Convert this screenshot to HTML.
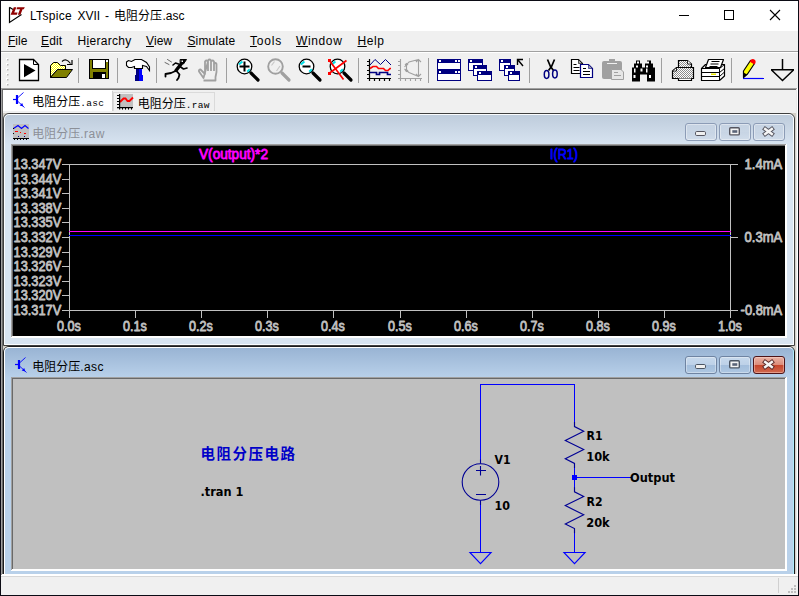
<!DOCTYPE html>
<html lang="zh">
<head>
<meta charset="utf-8">
<title>LTspice XVII - 电阻分压.asc</title>
<style>
html,body{margin:0;padding:0;}
body{width:799px;height:596px;overflow:hidden;background:#f0f0f0;position:relative;
  font-family:"Liberation Sans","Noto Sans CJK SC",sans-serif;font-size:12px;color:#000;}
.a{position:absolute;}
.t{position:absolute;white-space:nowrap;line-height:16px;font-size:12px;}
.cj{font-family:"Liberation Sans","Noto Sans CJK SC","WenQuanYi Zen Hei",sans-serif;}
.mi{position:absolute;top:33px;font-size:12px;line-height:16px;white-space:nowrap;}
.mi u{text-decoration:underline;text-decoration-thickness:1px;text-underline-offset:1px;}
svg{position:absolute;left:0;top:0;}
svg text{white-space:pre;}
</style>
</head>
<body>
<div class="a" style="left:1px;top:1px;width:797px;height:30px;background:#fff;"></div>
<div class="a" style="left:1px;top:31px;width:797px;height:20px;background:#f0f0f0;"></div>
<div class="a" style="left:1px;top:51px;width:797px;height:1px;background:#a0a0a0;"></div>
<div class="a" style="left:1px;top:52px;width:797px;height:1px;background:#fff;"></div>
<div class="a" style="left:1px;top:53px;width:797px;height:35px;background:#f0f0f0;"></div>
<div class="a" style="left:1px;top:88px;width:797px;height:488px;background:#d4d0c8;"></div>
<div class="a" style="left:1px;top:88px;width:797px;height:1px;background:#a0a0a0;"></div>
<div class="a" style="left:1px;top:88px;width:1px;height:488px;background:#a0a0a0;"></div>
<div class="a" style="left:2px;top:89px;width:795px;height:1px;background:#696969;"></div>
<div class="a" style="left:2px;top:89px;width:1px;height:486px;background:#696969;"></div>
<div class="a" style="left:797px;top:88px;width:1px;height:488px;background:#fff;"></div>
<div class="a" style="left:796px;top:89px;width:1px;height:486px;background:#e8e8e8;"></div>
<div class="a" style="left:1px;top:575px;width:797px;height:1px;background:#fff;"></div>
<div class="a" style="left:2px;top:574px;width:795px;height:1px;background:#fff;"></div>
<div class="a" style="left:3px;top:90px;width:793px;height:23px;background:#f0f0f0;"></div>
<div class="a" style="left:3px;top:90px;width:109px;height:21px;background:#fff;"></div>
<div class="a" style="left:112px;top:91px;width:1px;height:20px;background:#d0d0d0;"></div>
<div class="a" style="left:113px;top:92px;width:102px;height:19px;background:#f0f0f0;box-sizing:border-box;border:1px solid #dadada;border-bottom:none;"></div>
<div class="a" style="left:1px;top:576px;width:797px;height:1px;background:#d7d7d7;"></div>
<div class="a" style="left:1px;top:577px;width:797px;height:18px;background:#f0f0f0;"></div>
<div class="a" style="left:778px;top:578px;width:1px;height:15px;background:#d0d0d0;"></div>
<div class="t" id="tt0" style="left:30px;top:8px;letter-spacing:.33px;">LTspice</div>
<div class="t" id="tt1" style="left:77.5px;top:8px;">XVII</div>
<div class="t" id="tt2" style="left:105px;top:8px;">-</div>
<div class="t" id="tt3" style="left:114px;top:8px;font-family:"Liberation Sans","Noto Sans CJK SC","WenQuanYi Zen Hei",sans-serif;">电阻分压</div>
<div class="t" id="tt4" style="left:162.5px;top:8px;">.asc</div>
<div class="mi" id="m0" style="left:8px;letter-spacing:0px"><u>F</u>ile</div>
<div class="mi" id="m1" style="left:41px;letter-spacing:0.15px"><u>E</u>dit</div>
<div class="mi" id="m2" style="left:77.5px;letter-spacing:0.3px">H<u>i</u>erarchy</div>
<div class="mi" id="m3" style="left:146px;letter-spacing:0.15px"><u>V</u>iew</div>
<div class="mi" id="m4" style="left:187.4px;letter-spacing:0.16px"><u>S</u>imulate</div>
<div class="mi" id="m5" style="left:250px;letter-spacing:0.8px"><u>T</u>ools</div>
<div class="mi" id="m6" style="left:296px;letter-spacing:0.63px"><u>W</u>indow</div>
<div class="mi" id="m7" style="left:357.5px;letter-spacing:0.57px"><u>H</u>elp</div>
<div class="a" style="left:3px;top:113px;width:792px;height:233px;box-sizing:border-box;border:1px solid #3f3f3f;border-radius:6px 6px 0 0;background:linear-gradient(#bdcbdb 0px,#d8e4f1 31px,#d8e4f1);"><div class="a" style="left:0;top:0;right:0;bottom:0;box-sizing:border-box;border:1px solid #fafcfe;border-radius:5px 5px 0 0;"></div></div>
<div class="a" style="left:11px;top:144px;width:776px;height:194px;background:#fff;"></div>
<div class="a" style="left:11px;top:144px;width:775px;height:193px;background:#a0a0a0;"></div>
<div class="a" style="left:12px;top:145px;width:774px;height:192px;background:#fff;"></div>
<div class="a" style="left:12px;top:145px;width:773px;height:191px;background:#696969;"></div>
<div class="a" style="left:13px;top:146px;width:772px;height:190px;background:#000;"></div>
<div class="a" style="left:3px;top:346px;width:792px;height:228px;overflow:hidden;"><div class="a" style="left:0;top:0;width:792px;height:240px;box-sizing:border-box;border:1px solid #1c1c1c;border-radius:6px 6px 0 0;background:linear-gradient(#98b3d3 0px,#b9d1ea 31px,#b9d1ea);"><div class="a" style="left:0;top:0;right:0;bottom:0;box-sizing:border-box;border:1px solid #fff;border-right-color:#b0ecfb;border-radius:5px 5px 0 0;"></div></div></div>
<div class="a" style="left:11px;top:377px;width:776px;height:194px;background:#fff;"></div>
<div class="a" style="left:11px;top:377px;width:775px;height:193px;background:#a0a0a0;"></div>
<div class="a" style="left:12px;top:378px;width:774px;height:192px;background:#fff;"></div>
<div class="a" style="left:12px;top:378px;width:773px;height:191px;background:#696969;"></div>
<div class="a" style="left:13px;top:379px;width:772px;height:190px;background:#c0c0c0;"></div>
<div class="a" style="left:685px;top:123px;width:32px;height:18px;box-sizing:border-box;border-radius:3px;border:1px solid #8c9cb6;background:linear-gradient(#c6d3e3 0,#c9d6e5 49%,#c7d4e4 50%,#d0dcea 100%);box-shadow:inset 0 0 0 1px rgba(255,255,255,.4);"></div>
<div class="a" style="left:719px;top:123px;width:32px;height:18px;box-sizing:border-box;border-radius:3px;border:1px solid #8c9cb6;background:linear-gradient(#c6d3e3 0,#c9d6e5 49%,#c7d4e4 50%,#d0dcea 100%);box-shadow:inset 0 0 0 1px rgba(255,255,255,.4);"></div>
<div class="a" style="left:753px;top:123px;width:32px;height:18px;box-sizing:border-box;border-radius:3px;border:1px solid #8c9cb6;background:linear-gradient(#c6d3e3 0,#c9d6e5 49%,#c7d4e4 50%,#d0dcea 100%);box-shadow:inset 0 0 0 1px rgba(255,255,255,.4);"></div>
<div class="a" style="left:685px;top:356px;width:32px;height:18px;box-sizing:border-box;border-radius:3px;border:1px solid #6f84a2;background:linear-gradient(#c7d9ec 0,#bdd1e8 49%,#a3bedc 50%,#aec7e2 100%);box-shadow:inset 0 0 0 1px rgba(255,255,255,.35);"></div>
<div class="a" style="left:719px;top:356px;width:32px;height:18px;box-sizing:border-box;border-radius:3px;border:1px solid #6f84a2;background:linear-gradient(#c7d9ec 0,#bdd1e8 49%,#a3bedc 50%,#aec7e2 100%);box-shadow:inset 0 0 0 1px rgba(255,255,255,.35);"></div>
<div class="a" style="left:753px;top:356px;width:32px;height:18px;box-sizing:border-box;border-radius:3px;border:1px solid #4d1418;background:linear-gradient(#e9b3a6 0,#dc8b79 49%,#c6432a 50%,#cf6a50 100%);box-shadow:inset 0 0 0 1px rgba(255,220,210,.45);"></div>
<div class="t" style="left:32.200px;top:126px;color:#8c9098;"><span class="cj">电阻分压</span><span style="letter-spacing:.5px">.raw</span></div>
<div class="t" style="left:32.200px;top:359px;color:#000;"><span class="cj">电阻分压</span><span style="letter-spacing:.4px">.asc</span></div>
<div class="t" style="left:32.200px;top:94px;"><span class="cj">电阻分压</span><span style="font-family:'Liberation Mono',monospace;font-size:9.5px;letter-spacing:.3px;">.asc</span></div>
<div class="t" style="left:137.800px;top:96px;"><span class="cj">电阻分压</span><span style="font-family:'Liberation Mono',monospace;font-size:9.5px;letter-spacing:.3px;">.raw</span></div>
<svg width="799" height="596" viewBox="0 0 799 596">
<g><path d="M9.500,7.300 V22.500 L21.500,14.600 M9.500,7.300 L13,9.600" fill="none" stroke="#000" stroke-width="1.200"/><polygon points="13.800,7.200 16.400,7.200 14.200,12.600 17.600,12.600 16.800,14.800 10.600,14.800" fill="#900000"/><polygon points="17.200,7.200 24.800,7.200 23.800,9.200 22.600,9.200 20.400,14.800 17.800,14.800 20,9.200 16.400,9.200" fill="#900000"/></g><g shape-rendering="crispEdges"><rect x="679" y="15" width="10" height="1" fill="#000"/><rect x="724.500" y="10.500" width="9" height="9" fill="none" stroke="#000" stroke-width="1"/></g><path d="M770,10 L780,20 M780,10 L770,20" stroke="#000" stroke-width="1.100" fill="none"/><rect x="794" y="588" width="2" height="2" fill="#bfbfbf"/><rect x="794" y="591" width="2" height="2" fill="#bfbfbf"/><rect x="791" y="591" width="2" height="2" fill="#bfbfbf"/><rect x="794" y="585" width="2" height="2" fill="#bfbfbf"/><rect x="791" y="588" width="2" height="2" fill="#bfbfbf"/><rect x="788" y="591" width="2" height="2" fill="#bfbfbf"/>
<defs><pattern id="dz" width="2" height="2" patternUnits="userSpaceOnUse"><rect width="2" height="2" fill="#fff"/><rect width="1" height="1" fill="#8c8c8c"/><rect x="1" y="1" width="1" height="1" fill="#8c8c8c"/></pattern><pattern id="dy" width="2" height="2" patternUnits="userSpaceOnUse"><rect width="2" height="2" fill="#fff"/><rect width="1" height="1" fill="#ffff00"/><rect x="1" y="1" width="1" height="1" fill="#ffff00"/></pattern></defs>
<rect x="78" y="58" width="1" height="25" fill="#a0a0a0"/><rect x="117" y="58" width="1" height="25" fill="#a0a0a0"/><rect x="156" y="58" width="1" height="25" fill="#a0a0a0"/><rect x="226" y="58" width="1" height="25" fill="#a0a0a0"/><rect x="358" y="58" width="1" height="25" fill="#a0a0a0"/><rect x="428" y="58" width="1" height="25" fill="#a0a0a0"/><rect x="529" y="58" width="1" height="25" fill="#a0a0a0"/><rect x="661" y="58" width="1" height="25" fill="#a0a0a0"/><rect x="731" y="58" width="1" height="25" fill="#a0a0a0"/><rect x="6" y="58" width="2" height="2" fill="#fff"/><rect x="7" y="59" width="1.500" height="1.500" fill="#b4b4b4"/><rect x="6" y="63" width="2" height="2" fill="#fff"/><rect x="7" y="64" width="1.500" height="1.500" fill="#b4b4b4"/><rect x="6" y="68" width="2" height="2" fill="#fff"/><rect x="7" y="69" width="1.500" height="1.500" fill="#b4b4b4"/><rect x="6" y="73" width="2" height="2" fill="#fff"/><rect x="7" y="74" width="1.500" height="1.500" fill="#b4b4b4"/><rect x="6" y="78" width="2" height="2" fill="#fff"/><rect x="7" y="79" width="1.500" height="1.500" fill="#b4b4b4"/><rect x="6" y="83" width="2" height="2" fill="#fff"/><rect x="7" y="84" width="1.500" height="1.500" fill="#b4b4b4"/>
<g><path d="M19.5,59.5 H33.5 L38.5,64.5 V80.5 H19.5 Z" fill="#fff" stroke="#000" stroke-width="1.3"/><path d="M33.5,59.5 V64.5 H38.5" fill="none" stroke="#000" stroke-width="1"/><polygon points="24,64 24,77.2 35.5,70.5" fill="#000"/></g>
<g><path d="M50.5,77.5 V65.5 L53.5,62.5 H57.5 L60.5,65.5 H65.5 V69.5 H57.5 Z" fill="url(#dy)" stroke="#000" stroke-width="1"/><path d="M50.5,77.5 L57.5,69.5 H72.5 L66.5,77.5 Z" fill="#808000" stroke="#000" stroke-width="1"/><path d="M62,61.5 Q66,57.5 70.5,63.5" fill="none" stroke="#000" stroke-width="1.2"/><path d="M67,64.5 H72 V60" fill="none" stroke="#000" stroke-width="1.2"/></g>
<g shape-rendering="crispEdges"><rect x="89" y="59" width="20" height="20" fill="#000"/><rect x="90" y="60" width="18" height="18" fill="#808000"/><rect x="92" y="60" width="14" height="9" fill="#000"/><rect x="93" y="60" width="12" height="8" fill="#fff"/><rect x="93" y="72" width="13" height="6" fill="#000"/><rect x="102" y="74" width="3" height="4" fill="#fff"/><rect x="106" y="60" width="2" height="2" fill="#fff"/></g>
<g><path d="M126.5,62 L128.5,60.5 L131.5,61.5 L135,59.5 H141.5 L146.5,62.5 L149.5,67 V70.5 L146.5,66.5 L142.5,65.5 V68.5 H134.5 V66.5 L131.5,67.5 H128.5 L126.5,65.5 Z" fill="#fff" stroke="#000" stroke-width="1.1"/><rect x="136" y="69" width="3" height="12" fill="#000080"/><rect x="139" y="69" width="3" height="12" fill="#0000ff"/><rect x="135" y="75" width="2" height="6" fill="#000080"/><rect x="141" y="75" width="2" height="6" fill="#0000ff"/></g>
<g fill="none" stroke="#000" stroke-linecap="round" stroke-linejoin="round"><polygon points="180.5,59.5 186.5,59.5 183.5,64 180.5,63" fill="#000" stroke-width="1"/><rect x="181.5" y="60.5" width="1.5" height="1.5" fill="#fff" stroke="none"/><path d="M181.5,63.5 L176,70.5" stroke-width="3.4"/><path d="M178.5,64 L175.5,63 L173,65" stroke-width="1.6"/><path d="M180,66.5 L183.5,69 L187,68" stroke-width="1.6"/><path d="M175.500,71 L171,73 L165.5,74 V76.5" stroke-width="1.8"/><path d="M177,71.5 L179.5,74.500 L178.5,78 L177,80" stroke-width="1.8"/><path d="M165,62.5 l4,2 M167.5,59.5 l4,2.5" stroke-width="0.8" stroke="#444"/></g>
<g fill="none" stroke="#a0a0a0" stroke-width="1.8" stroke-linejoin="round"><path d="M203.5,80.500 H215.500 V77 L216.5,72 V64 Q215.5,62 214,64 V71 M214,64 V61.5 Q212.5,59.5 211,61.500 V71 M211,61.5 V60.5 Q209.500,58.5 208,60.5 V71 M208,61.500 Q206.5,59.5 205,61.5 V74 L200.500,69.5 Q198.5,69.5 199,71.500 L203.5,78 Z"/></g>
<g><line x1="251" y1="73" x2="258" y2="80" stroke="#000" stroke-width="3.2" stroke-linecap="round"/><circle cx="244.5" cy="66.5" r="7.300" fill="#fff" stroke="#000" stroke-width="1.3"/><path d="M238.9,64.5 l3.500,-3 M247.3,71.8 l2.500,-2.500" stroke="#00e0e8" stroke-width="2" fill="none"/></g><path d="M239.5,66.500 h10 M244.500,61.5 v10" stroke="#000" stroke-width="2" fill="none"/>
<g><line x1="282" y1="73" x2="289" y2="80" stroke="#a0a0a0" stroke-width="3.2" stroke-linecap="round"/><circle cx="275.5" cy="66.5" r="7.300" fill="#f0f0f0" stroke="#a0a0a0" stroke-width="1.9"/><path d="M271.5,65.5 l3,-4 M276.5,71 l3.5,-5" stroke="#c8c8c8" stroke-width="1.2" fill="none"/></g>
<g><line x1="313" y1="73" x2="320" y2="80" stroke="#000" stroke-width="3.2" stroke-linecap="round"/><circle cx="306.5" cy="66.5" r="7.300" fill="#fff" stroke="#000" stroke-width="1.3"/><path d="M300.9,64.5 l3.500,-3 M309.3,71.8 l2.500,-2.500" stroke="#00e0e8" stroke-width="2" fill="none"/></g><path d="M302.500,66.500 h8" stroke="#000" stroke-width="2" fill="none"/>
<g><line x1="344" y1="73" x2="351" y2="80" stroke="#000" stroke-width="3.2" stroke-linecap="round"/><circle cx="337.5" cy="66.5" r="7.300" fill="#fff" stroke="#000" stroke-width="1.3"/><path d="M331.9,64.5 l3.500,-3 M340.3,71.8 l2.500,-2.500" stroke="#00e0e8" stroke-width="2" fill="none"/></g><path d="M329,60 L343.5,79.500 M346.5,60.500 L329,73.500" stroke="#ff0000" stroke-width="1.7" fill="none"/><rect x="328" y="59" width="3" height="3" fill="#f00"/><rect x="328" y="72" width="3" height="3" fill="#f00"/>
<g fill="none"><path d="M369.500,59 V81 M367,78.500 H391 M367,61.500 h2 M367,65.500 h2 M367,70.500 h2 M367,74.500 h2 M374.500,79 v2 M379.500,79 v2 M384.500,79 v2 M389.500,79 v2" stroke="#000" stroke-width="1.2"/><path d="M370,65 L375,59.5 L380.500,64.5 L385.500,59.5 L391,65" stroke="#000080" stroke-width="1"/><path d="M370,68.500 L373,66.500 H376.500 L378.500,68.500 H383.500 L385.500,70.500 H388 L390,68.500 H391" stroke="#ff0000" stroke-width="1.7"/><path d="M370,72.500 H376.500 V74.500 H379.500 V72.500 H387.500 V74.500 H391" stroke="#000080" stroke-width="1.7"/></g>
<g fill="none" stroke="#a0a0a0" stroke-width="1.100"><path d="M400.500,59 V81 M398,78.500 H422 M398,61.500 h2 M398,65.500 h2 M398,70.500 h2 M398,74.500 h2 M405.500,79 v2 M410.500,79 v2 M415.500,79 v2 M420.500,79 v2"/><path d="M404.500,67 L409,62 L418.500,59.500 M404.500,69 L409,72.500 L418.500,76.500 M406.500,63.500 V71.500 M405,65 l1.500,-1.500 l1.500,1.500 M405,70 l1.500,1.500 l1.500,-1.500 M418.500,59.500 V76.500 M416,62 l2.500,-2.500 l2.500,2.500 M416,74 l2.500,2.500 l2.500,-2.500"/></g>
<g shape-rendering="crispEdges"><rect x="437.5" y="59.5" width="23" height="10" fill="#fff" stroke="#000080" stroke-width="1"/><rect x="437" y="59" width="24" height="4" fill="#000080"/><rect x="438.5" y="60" width="2" height="2" fill="#fff"/><rect x="454.5" y="60" width="2" height="2" fill="#fff"/><rect x="457.5" y="60" width="2" height="2" fill="#fff"/><rect x="437.5" y="70.5" width="23" height="10" fill="#fff" stroke="#000080" stroke-width="1"/><rect x="437" y="70" width="24" height="4" fill="#000080"/><rect x="438.5" y="71" width="2" height="2" fill="#fff"/><rect x="454.5" y="71" width="2" height="2" fill="#fff"/><rect x="457.5" y="71" width="2" height="2" fill="#fff"/></g>
<g shape-rendering="crispEdges"><rect x="468.5" y="59.5" width="14" height="11" fill="#fff" stroke="#000080" stroke-width="1"/><rect x="468" y="59" width="15" height="4" fill="#000080"/><rect x="469.5" y="60" width="2" height="2" fill="#fff"/><rect x="473.5" y="65.5" width="13" height="10" fill="#fff" stroke="#000080" stroke-width="1"/><rect x="473" y="65" width="14" height="4" fill="#000080"/><rect x="474.5" y="66" width="2" height="2" fill="#fff"/><rect x="477.5" y="71.5" width="14" height="9" fill="#fff" stroke="#000080" stroke-width="1"/><rect x="477" y="71" width="15" height="4" fill="#000080"/><rect x="478.5" y="72" width="2" height="2" fill="#fff"/></g>
<g shape-rendering="crispEdges"><rect x="499.5" y="59.5" width="11" height="11" fill="#fff" stroke="#000080" stroke-width="1"/><rect x="499" y="59" width="12" height="4" fill="#000080"/><rect x="500.5" y="60" width="2" height="2" fill="#fff"/><rect x="504.5" y="65.5" width="10" height="10" fill="#fff" stroke="#000080" stroke-width="1"/><rect x="504" y="65" width="11" height="4" fill="#000080"/><rect x="505.5" y="66" width="2" height="2" fill="#fff"/><rect x="508.5" y="71.5" width="11" height="9" fill="#fff" stroke="#000080" stroke-width="1"/><rect x="508" y="71" width="12" height="4" fill="#000080"/><rect x="509.5" y="72" width="2" height="2" fill="#fff"/></g><path d="M517.500,65 V59.500 H523 M518,60 L523,66" stroke="#000" stroke-width="1.4" fill="none"/>
<g fill="none"><path d="M547.500,59.500 L550.500,66.500 L553.500,70.500 M554.500,59.500 L551.500,66.500 L548.500,70.500" stroke="#000" stroke-width="1.700"/><ellipse cx="546.600" cy="74.500" rx="2.300" ry="3.900" stroke="#000080" stroke-width="1.500"/><ellipse cx="554.900" cy="74" rx="2.300" ry="3.900" stroke="#000080" stroke-width="1.500"/></g>
<g><path d="M571.500,59.500 H578.500 L582.500,63.500 V73.500 H571.500 Z" fill="#fff" stroke="#000" stroke-width="1.2"/><path d="M578.500,59.500 V63.500 H582.500 Z" fill="#a0a0a0" stroke="#000" stroke-width=".6"/><path d="M573.500,64.500 h3 M573.500,67.500 h6 M573.500,70.500 h6" stroke="#000" stroke-width="1"/><path d="M580.500,64.500 H588.500 L592.500,68.500 V77.500 H580.500 Z" fill="#fff" stroke="#000080" stroke-width="1.2"/><path d="M588.500,64.500 V68.500 H592.500 Z" fill="#a0a0a0" stroke="#000080" stroke-width=".6"/><path d="M583,68.500 h3 M583,71.500 h7 M583,74.500 h7" stroke="#000" stroke-width="1"/></g>
<g><rect x="602" y="61" width="20" height="18" rx="2" fill="#a0a0a0"/><rect x="609" y="59" width="6" height="3" fill="#a0a0a0"/><path d="M607,63.500 h10" stroke="#f0f0f0" stroke-width="1"/><path d="M611.500,69.500 H621 L623.500,72 V79.500 H611.500 Z" fill="#e6e6e6" stroke="#a0a0a0" stroke-width="1"/><path d="M614,72.500 h4 M614,75.500 h7" stroke="#a0a0a0" stroke-width="1"/></g>
<g><path d="M636,60.500 h4 v3 h2 v4 h3 v-4 h2 v-3 h4 v3 h2 v4 h2 v14 h-8 v-7 h-7 v7 h-8 v-14 h2 v-4 h2 Z" fill="#000"/><g fill="#fff"><rect x="637" y="61.500" width="2" height="2"/><rect x="647" y="61.500" width="2" height="2"/><rect x="636" y="65.500" width="2" height="2"/><rect x="646" y="65.500" width="2" height="2"/><rect x="634" y="68.500" width="1.500" height="4"/><rect x="646" y="68.500" width="1.500" height="4"/><rect x="640.500" y="68.500" width="2" height="3"/><rect x="633.500" y="75" width="2" height="3"/><rect x="649" y="75" width="2" height="3"/></g></g>
<g><path d="M678.500,67 V60.500 H687.500 L691.500,64 V67" fill="url(#dz)" stroke="#000" stroke-width="1.2"/><path d="M687.500,60.500 V64 H691.500" fill="#fff" stroke="#000" stroke-width=".8"/><path d="M672.500,71 L676.500,67.500 H693.500 V78.500 H672.500 Z" fill="url(#dz)" stroke="#000" stroke-width="1.2"/><path d="M678.500,78.500 V80.500 H691.500 V78.500" fill="#fff" stroke="#000" stroke-width="1.200"/><path d="M673,71 h3.500 v-3" stroke="#000" stroke-width=".8" fill="#fff"/></g>
<g stroke-linejoin="round"><path d="M701.500,68.500 L705.500,64.500 H724.500 V76 L719.500,80.500 H701.500 Z" fill="#fff" stroke="#000" stroke-width="1.200"/><path d="M701.500,68.500 H719.500 V80.500 M719.500,68.500 L724.500,64.500 M701.500,72.500 H719.500 L724.500,68.500 M701.500,76.500 H719.500 L724.500,72" fill="none" stroke="#000" stroke-width="1"/><path d="M705.500,67.500 L708.500,59.500 H723.500 L720.500,67.500 Z" fill="#fff" stroke="#000" stroke-width="1.200"/><path d="M711.500,61.500 h8 M710.500,64 h8 M709.500,66.500 h8" stroke="#000" stroke-width="1"/><rect x="711" y="73.500" width="5" height="1.500" fill="#e8e800"/></g>
<g><path d="M743,78.500 H764" stroke="#0000ff" stroke-width="1.200"/><path d="M743.500,77.500 V71 L750.500,60.500 L754.500,63.500 L747.500,74 Z" fill="#ffff00" stroke="#000" stroke-width="1.200" stroke-linejoin="round"/><path d="M743.500,77.500 V72.500 L747,74.500 Z" fill="#000"/><path d="M749.500,61.500 Q752,57.500 755,60 Q756.500,62 754.500,64.500 Z" fill="#ff0000"/></g>
<g fill="none" stroke="#000" stroke-width="1.500"><path d="M782.500,59 V69.500 M771,69.750 H794 M771.500,70 L782.500,80.500 L793.500,70"/></g>
<g transform="translate(11,92)" stroke="#0000ff" fill="none"><path d="M2,7.500 H5" stroke-width="1.200"/><path d="M6,3 V12" stroke-width="2.200"/><path d="M7,5.500 L12.500,0.500" stroke-width=".9"/><path d="M7,9.500 L13.500,15.500" stroke-width=".9"/><polygon points="12.400,14.500 11.200,10.900 8.700,13.600" fill="#0000ff" stroke="none"/></g>
<g transform="translate(117,94)"><rect x="3" y="0" width="13" height="13" fill="#c0c0c0"/><path d="M3,8 L6.500,4.500 L8.500,4.500 L10.500,7 L12.500,7 L16,3.500" stroke="#ff0000" stroke-width="1.900" fill="none"/><path d="M2.600,0 V15.600 M0,13.600 H16" stroke="#000" stroke-width="1.200"/><path d="M0,1.500 h2 M0,4.500 h2 M0,7.500 h2 M0,10.500 h2 M5.500,14 v1.600 M8.500,14 v1.600 M11.500,14 v1.600 M14.500,14 v1.600" stroke="#000" stroke-width="1"/></g>
<g transform="translate(13,124)"><rect x="0" y="0" width="16" height="15" fill="#c0c0c0"/><path d="M0.500,4.500 L5,1.500 L8.500,4.500 L12,1.500 L15.500,4.500" stroke="#0000ff" stroke-width="1.200" fill="none"/><path d="M2,7.500 h3 M11,9.500 h2" stroke="#ff0000" stroke-width="1.200"/><rect x="7" y="8" width="1" height="1" fill="#f00"/><rect x="5" y="12" width="1" height="1" fill="#000080"/><rect x="11" y="12" width="1" height="1" fill="#000080"/><rect x="0" y="4" width="1" height="1" fill="#000"/><rect x="0" y="9" width="1" height="1" fill="#000"/><rect x="0" y="14" width="16" height="1" fill="#000"/><path d="M1.500,15 v1 M4.500,15 v1 M7.500,15 v1 M10.500,15 v1 M13.500,15 v1" stroke="#000" stroke-width="1"/></g>
<g transform="translate(13,357)" stroke="#0000ff" fill="none"><path d="M2,7.500 H5" stroke-width="1.200"/><path d="M6,3 V12" stroke-width="2.200"/><path d="M7,5.500 L12.500,0.500" stroke-width=".9"/><path d="M7,9.500 L13.500,15.500" stroke-width=".9"/><polygon points="12.400,14.500 11.200,10.900 8.700,13.600" fill="#0000ff" stroke="none"/></g>
<rect x="695.500" y="131.5" width="10" height="4" rx="1.200" fill="#f0f0f0" stroke="#55555f" stroke-width="1"/><rect x="729.700" y="127.7" width="9.600" height="7.200" rx="1" fill="#f4f4f4" stroke="#55555f" stroke-width="1.400"/><rect x="732.300" y="130.2" width="5" height="2.600" fill="#5a6478"/><path d="M765.200,129 l6.600,5 M771.800,129 l-6.600,5" stroke="#55555f" stroke-width="4.400" stroke-linecap="square" fill="none"/><path d="M765.200,129 l6.600,5 M771.800,129 l-6.600,5" stroke="#f6f6f6" stroke-width="2.500" stroke-linecap="square" fill="none"/>
<rect x="695.500" y="364.5" width="10" height="4" rx="1.200" fill="#f0f0f0" stroke="#4b5563" stroke-width="1"/><rect x="729.700" y="360.7" width="9.600" height="7.200" rx="1" fill="#f4f4f4" stroke="#4b5563" stroke-width="1.400"/><rect x="732.300" y="363.2" width="5" height="2.600" fill="#5a6478"/><path d="M765.200,362 l6.600,5 M771.800,362 l-6.600,5" stroke="#5a2a2a" stroke-width="4.400" stroke-linecap="square" fill="none"/><path d="M765.200,362 l6.600,5 M771.800,362 l-6.600,5" stroke="#f6f6f6" stroke-width="2.500" stroke-linecap="square" fill="none"/>
<g shape-rendering="crispEdges" fill="#c0c0c0">
<rect x="69" y="164" width="1" height="147"/><rect x="730" y="164" width="1" height="147"/><rect x="69" y="164" width="662" height="1"/><rect x="69" y="310" width="662" height="1"/>
<rect x="62" y="164" width="7" height="1"/>
<rect x="62" y="179" width="7" height="1"/>
<rect x="62" y="193" width="7" height="1"/>
<rect x="62" y="208" width="7" height="1"/>
<rect x="62" y="222" width="7" height="1"/>
<rect x="62" y="237" width="7" height="1"/>
<rect x="62" y="252" width="7" height="1"/>
<rect x="62" y="266" width="7" height="1"/>
<rect x="62" y="281" width="7" height="1"/>
<rect x="62" y="295" width="7" height="1"/>
<rect x="62" y="310" width="7" height="1"/>
<rect x="731" y="164" width="7" height="1"/>
<rect x="731" y="237" width="7" height="1"/>
<rect x="731" y="310" width="7" height="1"/>
<rect x="69" y="311" width="1" height="7"/>
<rect x="135" y="311" width="1" height="7"/>
<rect x="201" y="311" width="1" height="7"/>
<rect x="267" y="311" width="1" height="7"/>
<rect x="333" y="311" width="1" height="7"/>
<rect x="400" y="311" width="1" height="7"/>
<rect x="466" y="311" width="1" height="7"/>
<rect x="532" y="311" width="1" height="7"/>
<rect x="598" y="311" width="1" height="7"/>
<rect x="664" y="311" width="1" height="7"/>
<rect x="730" y="311" width="1" height="7"/>
</g>
<g shape-rendering="crispEdges"><rect x="69" y="231" width="662" height="1" fill="#ff00ff"/><rect x="69" y="235" width="662" height="1" fill="#0000ff"/></g>
<g font-family="'Liberation Sans',sans-serif" font-weight="normal" font-size="14px" fill="#c0c0c0" stroke="#c0c0c0" stroke-width=".8" stroke-linejoin="round">
<text x="13.600" y="169" textLength="47.600" lengthAdjust="spacingAndGlyphs">13.347V</text>
<text x="13.600" y="184" textLength="47.600" lengthAdjust="spacingAndGlyphs">13.344V</text>
<text x="13.600" y="198" textLength="47.600" lengthAdjust="spacingAndGlyphs">13.341V</text>
<text x="13.600" y="213" textLength="47.600" lengthAdjust="spacingAndGlyphs">13.338V</text>
<text x="13.600" y="227" textLength="47.600" lengthAdjust="spacingAndGlyphs">13.335V</text>
<text x="13.600" y="242" textLength="47.600" lengthAdjust="spacingAndGlyphs">13.332V</text>
<text x="13.600" y="257" textLength="47.600" lengthAdjust="spacingAndGlyphs">13.329V</text>
<text x="13.600" y="271" textLength="47.600" lengthAdjust="spacingAndGlyphs">13.326V</text>
<text x="13.600" y="286" textLength="47.600" lengthAdjust="spacingAndGlyphs">13.323V</text>
<text x="13.600" y="300" textLength="47.600" lengthAdjust="spacingAndGlyphs">13.320V</text>
<text x="13.600" y="315" textLength="47.600" lengthAdjust="spacingAndGlyphs">13.317V</text>
<text x="57" y="331" textLength="23.800" lengthAdjust="spacingAndGlyphs">0.0s</text>
<text x="123" y="331" textLength="23.800" lengthAdjust="spacingAndGlyphs">0.1s</text>
<text x="189" y="331" textLength="23.800" lengthAdjust="spacingAndGlyphs">0.2s</text>
<text x="255" y="331" textLength="23.800" lengthAdjust="spacingAndGlyphs">0.3s</text>
<text x="321" y="331" textLength="23.800" lengthAdjust="spacingAndGlyphs">0.4s</text>
<text x="388" y="331" textLength="23.800" lengthAdjust="spacingAndGlyphs">0.5s</text>
<text x="454" y="331" textLength="23.800" lengthAdjust="spacingAndGlyphs">0.6s</text>
<text x="520" y="331" textLength="23.800" lengthAdjust="spacingAndGlyphs">0.7s</text>
<text x="586" y="331" textLength="23.800" lengthAdjust="spacingAndGlyphs">0.8s</text>
<text x="652" y="331" textLength="23.800" lengthAdjust="spacingAndGlyphs">0.9s</text>
<text x="718" y="331" textLength="23.800" lengthAdjust="spacingAndGlyphs">1.0s</text>
<text x="744.6" y="169" textLength="37.6" lengthAdjust="spacingAndGlyphs">1.4mA</text>
<text x="744.6" y="242" textLength="37.6" lengthAdjust="spacingAndGlyphs">0.3mA</text>
<text x="740.6" y="315" textLength="41.6" lengthAdjust="spacingAndGlyphs">-0.8mA</text>
<text x="199" y="159" textLength="69" lengthAdjust="spacingAndGlyphs" fill="#ff00ff" stroke="#ff00ff">V(output)*2</text>
<text x="550" y="159" textLength="28" lengthAdjust="spacingAndGlyphs" fill="#0000ff" stroke="#0000ff">I(R1)</text>
</g>
<g shape-rendering="crispEdges" fill="#0000ff">
<rect x="480" y="384" width="95" height="1"/>
<rect x="480" y="384" width="1" height="76"/>
<rect x="574" y="384" width="1" height="38"/>
<rect x="574" y="468" width="1" height="20"/>
<rect x="572" y="475" width="5" height="5"/>
<rect x="574" y="477" width="57" height="1"/>
<rect x="480" y="505" width="1" height="48"/>
<rect x="574" y="533" width="1" height="20"/>
</g>
<path d="M469.9,552.5 H491.1 L480.5,563.7 Z" fill="none" stroke="#0000ff" stroke-width="1.1"/>
<path d="M563.9,552.5 H585.1 L574.5,563.7 Z" fill="none" stroke="#0000ff" stroke-width="1.1"/>
<path d="M574.50,422.00 L574.50,426.60 L583.70,431.20 L565.30,440.40 L583.70,449.60 L565.30,458.80 L574.50,463.40 L574.50,468.00" fill="none" stroke="#000094" stroke-width="1.15" stroke-linejoin="miter"/>
<path d="M574.50,487.20 L574.50,491.80 L583.70,496.40 L565.30,505.60 L583.70,514.80 L565.30,524.00 L574.50,528.60 L574.50,533.20" fill="none" stroke="#000094" stroke-width="1.15" stroke-linejoin="miter"/>
<g fill="none" stroke="#000094" stroke-width="1.100"><circle cx="480.500" cy="482" r="18.300"/><path d="M480.500,459.500 V463.700 M480.500,500.300 V505 M476,470.500 H486 M480.500,466 V475.500 M476,494.500 H486"/></g>
<g font-family="'DejaVu Sans','Liberation Sans',sans-serif" font-weight="bold" font-size="12.500px" fill="#000">
<text x="494.5" y="464" textLength="16" lengthAdjust="spacingAndGlyphs">V1</text>
<text x="494.5" y="510" textLength="15.5" lengthAdjust="spacingAndGlyphs">10</text>
<text x="586.5" y="440" textLength="16" lengthAdjust="spacingAndGlyphs">R1</text>
<text x="586.2" y="461" textLength="23.5" lengthAdjust="spacingAndGlyphs">10k</text>
<text x="586.5" y="506" textLength="16" lengthAdjust="spacingAndGlyphs">R2</text>
<text x="586.2" y="527" textLength="23.5" lengthAdjust="spacingAndGlyphs">20k</text>
<text x="630" y="482" textLength="45" lengthAdjust="spacingAndGlyphs">Output</text>
<text x="200.5" y="496" textLength="43" lengthAdjust="spacingAndGlyphs">.tran 1</text>
</g>
<text x="200.500" y="458.800" font-family="'Liberation Sans','Noto Sans CJK SC','WenQuanYi Zen Hei',sans-serif" font-weight="bold" font-size="14.500px" fill="#0000c8" letter-spacing="1.500">电阻分压电路</text>
</svg>
<div class="a" style="left:0px;top:0px;width:799px;height:1px;background:#0b0b14;"></div>
<div class="a" style="left:0px;top:0px;width:1px;height:596px;background:#0b0b14;"></div>
<div class="a" style="left:798px;top:0px;width:1px;height:596px;background:#0b0b14;"></div>
<div class="a" style="left:0px;top:595px;width:799px;height:1px;background:#0b0b14;"></div>
</body>
</html>
